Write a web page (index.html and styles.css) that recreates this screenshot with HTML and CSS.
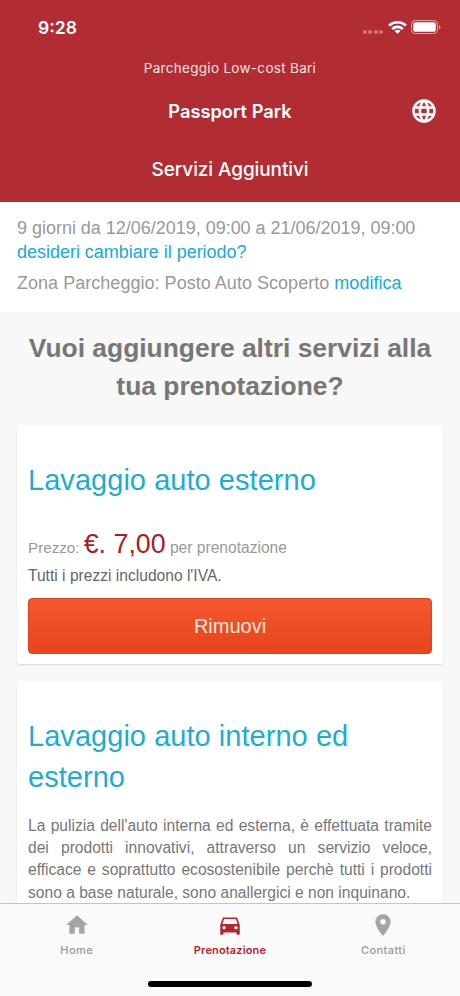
FILE: index.html
```html
<!DOCTYPE html>
<html lang="it">
<head>
<meta charset="utf-8">
<meta name="viewport" content="width=device-width, initial-scale=1">
<title>Passport Park</title>
<link rel="stylesheet" href="styles.css">
</head>
<body>
<div class="app">
  <header class="header">
    <div class="status">
      <span class="clock">9:28</span>
      <div class="status-icons">
        <div class="signal"><i></i><i></i><i></i><i></i></div>
        <svg class="wifi" width="19" height="14" viewBox="0 0 18 13" fill="none" stroke="#fff" stroke-width="2.4"><path d="M1 5.2a11.5 11.5 0 0 1 16 0M4 8.400a7.2 7.2 0 0 1 10 0"/><path d="M9 13 6.2 10.400a4 4 0 0 1 5.6 0z" fill="#fff" stroke="none"/></svg>
        <svg class="battery" width="30" height="14" viewBox="0 0 30 14"><rect x=".5" y=".5" width="26" height="13" rx="3.6" fill="none" stroke="#e3a3a5"/><rect x="2.2" y="2.2" width="22.6" height="9.6" rx="2" fill="#fff"/><path d="M28 5v4.4q1.5-.7 1.5-2.2T28 5z" fill="#e3a3a5"/></svg>
      </div>
    </div>
    <div class="subtitle">Parcheggio Low-cost Bari</div>
    <div class="titlebar">
      <span></span>
      <h1 class="brand">Passport Park</h1>
      <svg class="globe" width="28" height="28" viewBox="0 0 24 24" fill="#fff"><path d="M11.99 2C6.47 2 2 6.48 2 12s4.47 10 9.99 10C17.52 22 22 17.52 22 12S17.52 2 11.99 2zm6.93 6h-2.95a15.65 15.65 0 0 0-1.38-3.56A8.03 8.03 0 0 1 18.92 8zM12 4.04c.83 1.2 1.48 2.53 1.91 3.96h-3.82c.43-1.43 1.08-2.76 1.91-3.96zM4.26 14C4.1 13.36 4 12.69 4 12s.1-1.36.26-2h3.38c-.08.66-.14 1.32-.14 2s.06 1.34.14 2H4.26zm.82 2h2.95c.32 1.25.78 2.45 1.38 3.56A7.99 7.99 0 0 1 5.08 16zm2.95-8H5.08a7.99 7.99 0 0 1 4.33-3.56A15.65 15.65 0 0 0 8.03 8zM12 19.96c-.83-1.2-1.48-2.53-1.91-3.96h3.82c-.43 1.43-1.08 2.76-1.91 3.96zM14.34 14H9.66c-.09-.66-.16-1.32-.16-2s.07-1.35.16-2h4.68c.09.65.16 1.32.16 2s-.07 1.34-.16 2zm.25 5.56c.6-1.11 1.06-2.31 1.38-3.56h2.95a8.03 8.03 0 0 1-4.33 3.56zM16.36 14c.08-.66.14-1.32.14-2s-.06-1.34-.14-2h3.38c.16.64.26 1.31.26 2s-.1 1.36-.26 2h-3.38z"/></svg>
    </div>
    <h2 class="section-title">Servizi Aggiuntivi</h2>
  </header>

  <section class="booking">
    <p class="period">9 giorni da 12/06/2019, 09:00 a 21/06/2019, 09:00<br><a class="change">desideri cambiare il periodo?</a></p>
    <p class="zone">Zona Parcheggio: Posto Auto Scoperto <a>modifica</a></p>
  </section>

  <main class="content">
    <h2 class="question">Vuoi aggiungere altri servizi alla<br>tua prenotazione?</h2>
    <article class="card">
      <h3 class="service">Lavaggio auto esterno</h3>
      <p class="price">Prezzo: <strong>€. 7,00</strong> <span>per prenotazione</span></p>
      <p class="vat">Tutti i prezzi includono l'IVA.</p>
      <button class="remove">Rimuovi</button>
    </article>
    <article class="card">
      <h3 class="service">Lavaggio auto interno ed esterno</h3>
      <p class="description">La pulizia dell'auto interna ed esterna, è effettuata tramite dei prodotti innovativi, attraverso un servizio veloce, efficace e soprattutto ecosostenibile perchè tutti i prodotti sono a base naturale, sono anallergici e non inquinano.</p>
    </article>
  </main>

  <footer class="footer">
    <nav class="tabs">
      <a class="tab"><svg width="26" height="26" viewBox="0 0 24 24"><path d="M10 20v-6h4v6h5v-8h3L12 3 2 12h3v8z"/></svg><span>Home</span></a>
      <a class="tab active"><svg width="26" height="26" viewBox="0 0 24 24"><path d="M18.92 6.01C18.72 5.42 18.16 5 17.5 5h-11c-.66 0-1.21.42-1.42 1.01L3 12v8c0 .55.45 1 1 1h1c.55 0 1-.45 1-1v-1h12v1c0 .55.45 1 1 1h1c.55 0 1-.45 1-1v-8l-2.08-5.99zM6.5 16c-.83 0-1.5-.67-1.5-1.5S5.67 13 6.5 13s1.5.67 1.5 1.5S7.33 16 6.5 16zm11 0c-.83 0-1.5-.67-1.5-1.5s.67-1.5 1.5-1.5 1.5.67 1.5 1.5-.67 1.5-1.5 1.5zM5 11l1.5-4.5h11L19 11H5z"/></svg><span>Prenotazione</span></a>
      <a class="tab"><svg width="26" height="26" viewBox="0 0 24 24"><path d="M12 2C8.13 2 5 5.13 5 9c0 5.25 7 13 7 13s7-7.75 7-13c0-3.87-3.13-7-7-7zm0 9.500a2.500 2.500 0 0 1 0-5 2.500 2.500 0 0 1 0 5z"/></svg><span>Contatti</span></a>
    </nav>
    <div class="home-indicator"></div>
  </footer>
</div>
</body>
</html>
```
FILE: styles.css
```css
* { box-sizing: border-box; }
body { margin: 0; font-family: "Liberation Sans", Arial, sans-serif; }
h1, h2, h3, p { margin: 0; font-weight: 400; }
.app { display: flex; flex-direction: column; width: 460px; height: 996px; overflow: hidden; background: #f8f8f8; }

.header { flex: none; height: 202px; background: #b22d33; color: #fff; font-family: Inter, sans-serif; text-align: center; }
.status { display: flex; justify-content: space-between; height: 55px; padding: 18px 19px 0 38px; }
.clock { font-size: 17.500px; line-height: 20px; font-weight: 600; }
.status-icons { display: flex; align-items: flex-start; padding-top: 2px; }
.signal { display: flex; gap: 1.500px; padding: 10px 5px 0 0; }
.signal i { width: 4px; height: 4px; border-radius: 50%; background: #d27579; }
.wifi { margin-right: 4px; }
.subtitle { height: 27px; font-size: 13.500px; line-height: 27px; letter-spacing: 0.3px; color: #fbe3e0; }
.titlebar { display: grid; grid-template-columns: 28px 1fr 28px; align-items: center; height: 58px; padding: 0 22px; }
.brand { font-size: 18.300px; font-weight: 600; }
.globe { stroke: #fff; stroke-width: 0.2; }
.section-title { height: 58px; font-size: 19px; font-weight: 550; line-height: 59px; letter-spacing: -0.1px; }

.booking { flex: none; height: 110px; padding: 14px 17px 0; background: #fff; color: #999; font-size: 18px; line-height: 24px; white-space: nowrap; }
.booking a { color: #15aada; }
.period { letter-spacing: -0.02px; }
.zone { padding-top: 7px; letter-spacing: 0.03px; }

.content { flex: 1; min-height: 0; overflow: hidden; padding: 17px 17px 0; }
.question { margin-bottom: 21px; color: #777; font-size: 26.400px; font-weight: 700; line-height: 38px; text-align: center; white-space: nowrap; }
.card { margin-bottom: 18px; padding: 34px 11px 10px; border-radius: 3px; background: #fff; box-shadow: 0 1px 2px rgba(0, 0, 0, 0.14); }
.service { color: #1badd2; font-size: 29px; line-height: 41px; letter-spacing: 0.04px; }
.price { height: 37px; margin-top: 25px; color: #999; font-size: 15.200px; line-height: 37px; }
.price strong { color: #a91d27; font-size: 26.800px; font-weight: 400; }
.price span { font-size: 15.600px; }
.vat { height: 24px; margin-top: 1px; color: #666; font-size: 15.600px; line-height: 24px; }
.remove { display: block; width: 100%; height: 56px; margin-top: 10px; padding: 0; border: 1px solid #d7441f; border-radius: 4px; background: linear-gradient(#f4572e, #e7451c); color: #feeade; font: 20px/54px "Liberation Sans", Arial, sans-serif; }
.description { margin-top: 17px; color: #777; font-size: 15.600px; line-height: 22.200px; text-align: justify; }

.footer { flex: none; height: 93px; border-top: 1px solid #c5c3c3; background: #fafafa; }
.tabs { display: grid; grid-template-columns: repeat(3, 1fr); height: 77px; padding-top: 8px; }
.tab { display: flex; flex-direction: column; align-items: center; color: #999; font: 500 11px/15px Inter, sans-serif; letter-spacing: 0.4px; }
.tab svg { fill: #a5a5a5; margin-bottom: 5px; }
.tab.active { color: #b3242c; font-weight: 600; letter-spacing: 0.15px; }
.tab.active svg { fill: #b3242c; }
.home-indicator { width: 164px; height: 6px; margin: 0 auto; border-radius: 3px; background: #000; }
```
